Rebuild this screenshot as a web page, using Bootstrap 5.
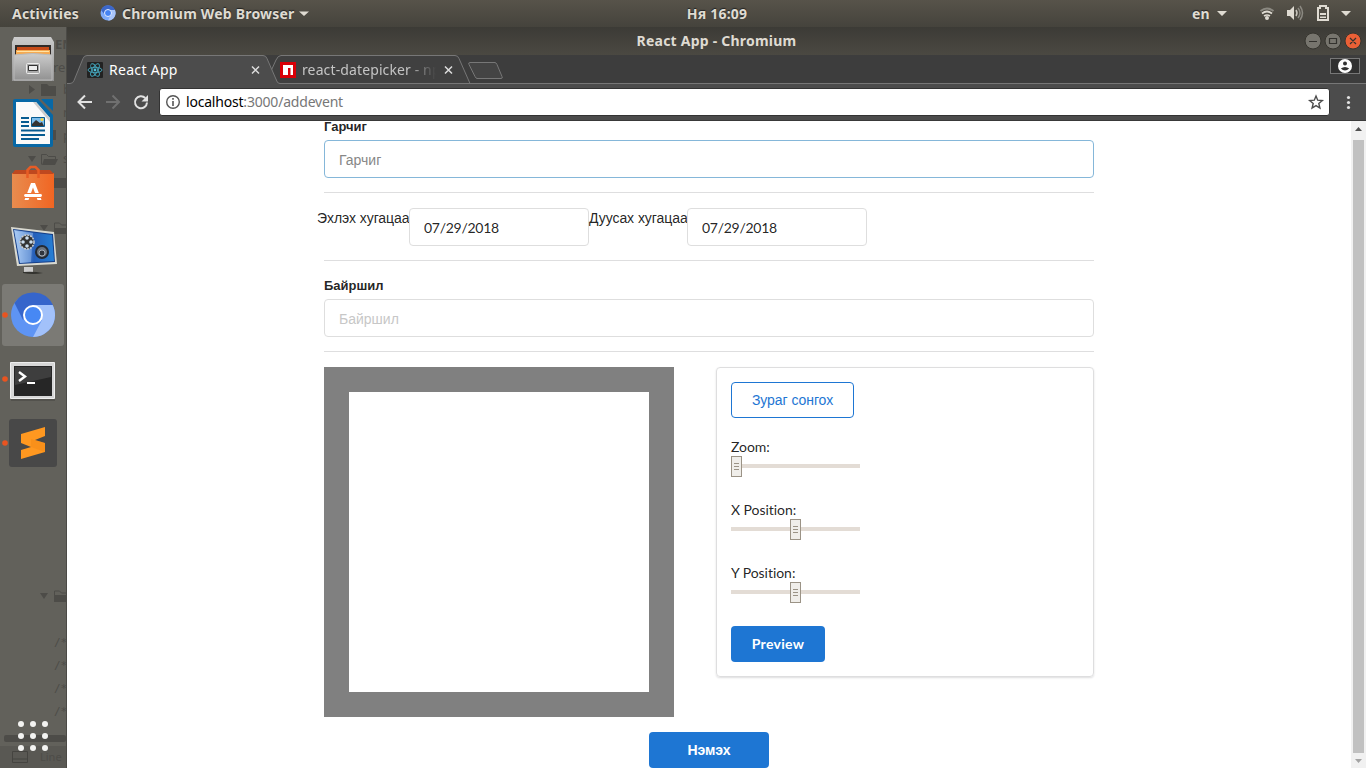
<!DOCTYPE html>
<html lang="mn">
<head>
<meta charset="utf-8">
<meta name="viewport" content="width=device-width, initial-scale=1">
<title>React App</title>
<link href="https://cdn.jsdelivr.net/npm/bootstrap@5.3.0/dist/css/bootstrap.min.css" rel="stylesheet">
<style>
  html, body { height: 100%; overflow: hidden; }
  body { font-family: "Noto Sans", sans-serif; background: #fff; }
  svg { display: block; flex: none; }
  .topbar { height: 27px; flex: none; background: linear-gradient(#57534a, #45433c); color: #dfdbd2; font: bold 14px/27px "Noto Sans", sans-serif; letter-spacing: .2px; text-shadow: 0 -1px 1px #222; }
  .dock { width: 67px; flex: none; background: #62615b; border-right: 1px solid #4b4a46; position: relative; }
  .dock > svg { position: relative; }
  .ghost { position: absolute !important; left: 0; top: 0; font-family: "Noto Sans", sans-serif; font-size: 13px; }
  .titlebar { height: 28px; flex: none; background: linear-gradient(#3c3b36, #4b4942); color: #dfdbd2; font: bold 14px/28px "Noto Sans", sans-serif; letter-spacing: .22px; }
  .tabstrip { height: 29px; flex: none; background: #3d3d3d; position: relative; }
  .tabshapes { position: absolute; left: 0; top: 0; }
  .tabrow { position: relative; height: 29px; color: #fff; font: 14px/29px "Noto Sans", sans-serif; white-space: nowrap; }
  .tabtitle { overflow: hidden; margin-left: 6px; letter-spacing: .3px; }
  .fade-out { color: #c4c4c4; letter-spacing: .12px; -webkit-mask-image: linear-gradient(90deg, #000 106px, transparent 134px); }
  .toolbar { height: 37px; flex: none; background: #4c4c4c; border-bottom: 1px solid #393939; }
  .omnibox { height: 28px; background: #fff; border: 1px solid #333; border-radius: 3px; font: 14px/26px "Noto Sans", sans-serif; letter-spacing: -.2px; color: #777; }
  .viewport-area { min-height: 0; background: #fff; font-family: Lato, "Liberation Sans", sans-serif; font-size: 14px; color: rgba(0,0,0,.87); overflow: hidden; font-variant-ligatures: none; }
  .event-form { width: 770px; margin-left: 257px; }
  .cyr { font-family: "Liberation Sans", sans-serif; }
  .event-form label { display: block; font-size: 13px; font-weight: 700; line-height: 13px; }
  .event-form .form-control { height: 38px; font-size: 14px; line-height: 17px; padding: 9px 14px; border: 1px solid #dedede; border-radius: 4px; color: rgba(0,0,0,.87); }
  .event-form .form-control.cyr { padding: 11px 14px 9px; }
  .event-form .form-control::placeholder { color: #c7c7c7; opacity: 1; }
  .event-form .form-control.active { border-color: #85b7d9; }
  .event-form .form-control.active::placeholder { color: #878787; }
  .event-form hr { margin: 14px 0 15px; border-color: #d4d4d5; opacity: 1; border-top: 1px solid #dededf; }
  .event-form .datefield { width: 180px; letter-spacing: -.28px; }
  .dates { margin-left: -7px; line-height: 20px; }
  .dates .cyr { letter-spacing: -.06px; }
  .cropbox { width: 350px; height: 350px; border: 25px solid #808080; }
  .panel { width: 378px; height: 310px; border: 1px solid #dededf; border-radius: 4px; box-shadow: 0 1px 2px rgba(34,36,38,.15); padding: 14px; }
  .event-form .btn { height: 36px; border-radius: 4px; font-size: 14px; line-height: 14px; padding: 0 20px; }
  .event-form .pick { color: #1e76d3; border-color: #1e76d3; width: 123px; padding: 0; letter-spacing: -.06px; }
  .solid { background: #1e76d3; color: #fff; font-weight: 700; border: 0; }
  .preview { width: 94px; letter-spacing: .3px; }
  .slider-group { height: 63px; line-height: 20px; letter-spacing: -.04px; }
  .track { width: 129px; height: 4px; background: #e3dcd5; margin-top: 7px; position: relative; }
  .thumb { position: absolute; top: -8px; }
  .scroller { width: 15px; background: #f1f1f1; flex: none; }
  .scroll-thumb { width: 11px; background: #c1c1c1; height: 613px; }
</style>
</head>
<body class="d-flex flex-column">
<header class="topbar d-flex position-relative">
  <span style="margin-left:12px;width:68px">Activities</span>
  <svg width="16" height="27" style="margin-left:20px" viewBox="0 0 16 27"><circle cx="8" cy="13" r="7.500" fill="#7daafa"/><path d="M1 10A7.500 7.500 0 0 1 15 10H8L5 15Z" fill="#3c67c9"/><path d="M8 10h7A7.500 7.500 0 0 1 8 20.500L11 14Z" fill="#a9c5fa"/><circle cx="8" cy="13" r="3.500" fill="#4583f3" stroke="#e4edff"/></svg>
  <span class="text-nowrap" style="margin-left:6px;width:173px">Chromium Web Browser</span>
  <svg width="10" height="27" style="margin-left:4px"><path d="M0 11.500h10L5 16Z" fill="#dfdbd2"/></svg>
  <span class="position-absolute start-50 translate-middle-x" style="padding-left:68px">Ня 16:09</span>
  <span class="ms-auto" style="width:20px">en</span>
  <svg width="154" height="27" viewBox="1212 0 154 27" fill="#dfdbd2"><path d="M1217 11h10l-5 5ZM1341 11h10l-5 5Z"/><circle cx="1267" cy="18" r="2"/><path d="M1260.500 11q6.500-5 13 0" fill="none" stroke="#8b8981" stroke-width="2"/><path d="M1262 13.500q5-4 10 0M1264 16q3-2 6 0" fill="none" stroke="#dfdbd2" stroke-width="1.700"/><path d="M1287 10h3l4-4v14l-4-4h-3Z"/><path d="M1296 10q2 3 0 6" stroke="#c9c6be" fill="none" stroke-width="1.500"/><path d="M1298 8q4 5 0 10M1300 6q5 7 0 14" stroke="#8b8981" fill="none" stroke-width="1.500"/><path d="M1318 8h2V6h6v2h2v12h-10Z" fill="none" stroke="#dfdbd2" stroke-width="2"/><path d="M1320 13h6v2h-6ZM1320 16.500h6v1.500h-6Z"/></svg>
</header>

<div class="d-flex flex-grow-1" style="min-height:0">
  <aside class="dock d-flex flex-column">
    <svg class="ghost" width="66" height="741" viewBox="0 27 66 741" fill="#4d4c48">
      <text x="55" y="49" font-weight="bold">EN</text><text x="53" y="72">rec</text>
      <path d="M29 85l6 4.500-6 4.500ZM41 84h6l2 2h7v10H41ZM41 130h15v10H41ZM28 156h8l-4 6ZM54 178h12v10H54ZM40 225h8l-4 6ZM40 593h8l-4 6Z"/><path d="M41.500 164.500v-10h5l2 2h7v3M54.500 233v-10h5l2 2h5M54.500 602v-11h5l2 2h5" fill="none" stroke="#4d4c48"/><path d="M44 159h14l-3 6H42ZM54 228h12v6H54ZM54 595h12v7H54Z"/>
      <text x="63" y="94">b</text><text x="63" y="117">n</text><text x="63" y="140">p</text><text x="63" y="163">s</text>
      <g font-family="DejaVu Sans Mono" font-size="11"><text x="54" y="646">/*</text><text x="54" y="669">/*</text><text x="54" y="692">/*</text><text x="54" y="715">/*</text></g>
      <rect x="4" y="735" width="62" height="7" rx="2"/><path d="M0 746h66v22H0Z" fill="#595853"/><path d="M12.500 751.500h15v11h-15ZM13 759h15" fill="none" stroke="#454440"/><text x="40" y="761" font-size="11">Line</text>
    </svg>
    <svg width="66" height="64" viewBox="0 27 66 64"><defs><linearGradient id="metal" x2="0" y2="1"><stop stop-color="#ccc"/><stop offset="1" stop-color="#929292"/></linearGradient></defs><path d="M14 37h37l3 5v39H12V42Z" fill="url(#metal)"/><path d="M15 45h36v11H15Z" fill="#312b28"/><path d="M17 47h32v8H17Z" fill="#c64b18"/><path d="M16 50h34v6H16Z" fill="#f5aa52"/><path d="M17 51h32v1H17Z" fill="#ffe3a5"/><path d="M14 55q19-3 38 0v25H14Z" fill="url(#metal)" stroke="#b9b9b9"/><rect x="26.500" y="63.500" width="13" height="10" rx="1" fill="#aaa" stroke="#ededed"/><path d="M28.500 65.500h9v5h-9Z" fill="#eee" stroke="#333"/></svg>
    <svg width="66" height="64" viewBox="0 91 66 64"><path d="M15 99h23l15 16v30q0 2-2 2H15q-2 0-2-2v-44q0-2 2-2ZM41 99h12v12Z" fill="#0768a6"/><path d="M16 102h20l14 16v26H16Z" fill="#fafafa"/><path d="M36 102l14 16v4L33 102Z" fill="#ccc"/><path d="M21 118h8M21 122h8M21 126h8M21 130.500h24M21 135h24M21 139h18" stroke="#085c91" stroke-width="2"/><path d="M31.500 117.500h13v9h-13Z" fill="#7ebeec" stroke="#085c91"/><path d="M32 126v-2l4-4 4 3 2-1 2 4Z" fill="#333"/><circle cx="42" cy="119.500" r="1.500" fill="#f6d545"/></svg>
    <svg width="66" height="64" viewBox="0 155 66 64"><defs><linearGradient id="bag" x2="1"><stop stop-color="#e88c4f"/><stop offset="1" stop-color="#f16522"/></linearGradient></defs><path d="M12 173h42v35H12Z" fill="url(#bag)"/><path d="M12 174l3-4h35l4 4Z" fill="#bf481f"/><path d="M27.500 178v-8l3-3h5l3 3v8" fill="none" stroke="#e75c25" stroke-width="2.500"/><path d="M31 183h4l6.500 17h-4L33 187.500 28.500 200h-4Z" fill="#fff"/><path d="M24 193h18v5H24Z" fill="#f07434"/><path d="M25.500 195.500h15" fill="none" stroke="#fff" stroke-width="2.800" stroke-linecap="round"/></svg>
    <svg width="66" height="64" viewBox="0 219 66 64"><defs><linearGradient id="mon" x2="1"><stop stop-color="#a7caf5"/><stop offset=".5" stop-color="#265fb9"/><stop offset="1" stop-color="#2680d5"/></linearGradient></defs><path d="M11 227l43 5 3 32-40 2Z" fill="#d9d9d0"/><path d="M13 229l40 5 2 28-36 2Z" fill="#173f88"/><path d="M14 230l38 5 2 26-34 2Z" fill="url(#mon)"/><path d="M33 233l-2 29-11 1-5-32Z" fill="#b4d1f8" opacity=".4"/><circle cx="27" cy="242" r="7" fill="#333" stroke="#ccc" stroke-width="1.500" stroke-dasharray="2 1"/><g fill="#cde"><circle cx="27" cy="238" r="1.800"/><circle cx="27" cy="246" r="1.800"/><circle cx="23" cy="242" r="1.800"/><circle cx="31" cy="242" r="1.800"/></g><circle cx="42" cy="252" r="6" fill="#6b737d" stroke="#242a33" stroke-width="2"/><circle cx="42" cy="253" r="3" fill="#30353d" stroke="#a4adb8"/><path d="M24 267h9v5h-9Z" fill="#ccc"/><path d="M23 272q10-1 20 1-10 2-20 0Z" fill="#33332f"/></svg>
    <svg width="66" height="64" viewBox="0 283 66 64"><rect x="2" y="284" width="62" height="62" rx="3" fill="#7b7a75"/><circle cx="5" cy="315" r="2.800" fill="#e95420"/><circle cx="33" cy="315" r="22" fill="#5e94f4"/><path d="M14.500 303A22 22 0 0 1 53 305H33L23 320Z" fill="#3665cb"/><path d="M33 305h19.600A22 22 0 0 1 33 337L42 320Z" fill="#a2c1fa"/><circle cx="33" cy="315" r="9" fill="#4788f4" stroke="#fff" stroke-width="2"/></svg>
    <svg width="66" height="64" viewBox="0 347 66 64"><circle cx="5" cy="379" r="2.800" fill="#e95420"/><path d="M10.500 362.500h44v36h-44Z" fill="#d7d7d7" stroke="#eee"/><path d="M11 400h44" stroke="#454440"/><path d="M14 366h38v30H14Z" fill="#262626"/><path d="M15 367h36v10L15 385Z" fill="#3e3e3e"/><path d="M19 372l6 4.500-6 4.500" fill="none" stroke="#fff" stroke-width="2.400"/><path d="M27 383h8" stroke="#fff" stroke-width="2"/></svg>
    <svg width="66" height="64" viewBox="0 411 66 64"><circle cx="5" cy="443" r="2.800" fill="#e95420"/><rect x="9" y="419" width="48" height="48" rx="3" fill="#484848"/><path d="M21 434l24-7v9l-10 4 10 3v9l-24 7v-9l10-3-10-4Z" fill="#ff9820"/><path d="M31 439l14 4v9l-14-5Z" fill="#ed8012" opacity=".35"/></svg>
    <svg class="mt-auto" width="66" height="64" viewBox="0 704 66 64" fill="#f3f3f1"><g id="dots"><circle cx="21" cy="724" r="3"/><circle cx="33" cy="724" r="3"/><circle cx="45" cy="724" r="3"/></g><use href="#dots" y="12"/><use href="#dots" y="24"/></svg>
  </aside>

  <section class="d-flex flex-column flex-grow-1" style="min-width:0">
    <div class="titlebar d-flex position-relative">
      <span class="position-absolute start-50 translate-middle-x text-nowrap">React App - Chromium</span>
      <svg class="ms-auto" width="66" height="28" viewBox="1300 27 66 28"><g fill="#77756e" stroke="#36352f"><circle cx="1313" cy="41" r="8"/><circle cx="1333" cy="41" r="8"/><circle cx="1353" cy="41" r="8" fill="#eb6036"/></g><path d="M1309 41.500h8M1329.500 38.500h7v5h-7ZM1350 38l6 6M1356 38l-6 6" fill="none" stroke="#33322e" stroke-width="1.200"/></svg>
    </div>
    <div class="tabstrip">
      <svg class="tabshapes" width="1299" height="29" viewBox="67 55 1299 29"><path d="M271 71l5-11q2-4.500 5-4.500h174q3 0 4 3l11 25H278Z" fill="#404040" stroke="#777"/><path d="M67 83.500h3q3 0 4-3l9-22q1-3 4-3h176q3 0 4 3l10 23q1 2 3 2H1366V84H67Z" fill="#4c4c4c"/><path d="M67 83.500h3q3 0 4-3l9-22q1-3 4-3h176q3 0 4 3l10 23q1 2 3 2H1366" fill="none" stroke="#777"/><path d="M470 62.500h25q1 0 2 2l5 12q1 2-1 2h-24q-1 0-2-2l-6-12q-1-2 1-2Z" fill="#444" stroke="#777"/><rect x="1330.500" y="58.500" width="29" height="15" fill="#303030" stroke="#777"/><circle cx="1345" cy="66" r="7" fill="#fff"/><circle cx="1345" cy="63.500" r="2" fill="#333"/><path d="M1340.800 68.500q4.200-3 8.400 0-4.200 4-8.400 0Z" fill="#333"/></svg>
      <div class="tabrow d-flex">
        <svg width="16" height="29" viewBox="0 0 16 29" style="margin-left:20px"><rect y="7" width="16" height="16" rx="1" fill="#222"/><g fill="none" stroke="#45a9c0" stroke-width=".9"><ellipse cx="8" cy="15" rx="7" ry="2.700"/><ellipse cx="8" cy="15" rx="7" ry="2.700" transform="rotate(60 8 15)"/><ellipse cx="8" cy="15" rx="7" ry="2.700" transform="rotate(120 8 15)"/></g><circle cx="8" cy="15" r="1.400" fill="#53c1dc"/></svg>
        <span class="tabtitle" style="width:142px">React App</span>
        <svg width="9" height="29"><path d="M1 11.500l7 7M8 11.500l-7 7" stroke="#ddd" stroke-width="1.500"/></svg>
        <svg width="16" height="29" style="margin-left:20px"><path d="M0 7h16v16H0Z" fill="#d90007"/><path d="M3 10h10v10h-2.500v-7H8v7H3Z" fill="#fff"/></svg>
        <span class="tabtitle fade-out" style="width:134px">react-datepicker - npm</span>
        <svg width="9" height="29" style="margin-left:8px"><path d="M1 11.500l7 7M8 11.500l-7 7" stroke="#ddd" stroke-width="1.500"/></svg>
      </div>
    </div>
    <div class="toolbar d-flex align-items-center">
      <svg width="92" height="36" viewBox="67 84 92 36" fill="none" stroke-width="2"><path d="M92 102H79M85 95.500L78.500 102l6.500 6.500" stroke="#e2e2e2"/><path d="M106 102h13M112.500 95.500L119 102l-6.500 6.500" stroke="#707070"/><path d="M145.300 98A6 6 0 1 0 147 102.500" stroke="#e2e2e2"/><path d="M148 95v6.500h-6.500Z" fill="#e2e2e2"/></svg>
      <div class="omnibox d-flex flex-grow-1">
        <svg width="26" height="26" viewBox="160 89 26 26"><circle cx="173" cy="102" r="6.300" fill="none" stroke="#555" stroke-width="1.400"/><path d="M172.200 101h1.600v5h-1.600ZM172.200 98h1.600v1.700h-1.600Z" fill="#555"/></svg>
        <span><span class="text-black">localhost</span>:3000/addevent</span>
        <svg class="ms-auto" width="26" height="26" viewBox="1303 89 26 26"><path d="M1316 96l1.700 4.200 4.600.3-3.500 3 1.100 4.500-3.900-2.400-3.900 2.400 1.100-4.500-3.500-3 4.600-.3Z" fill="none" stroke="#4c4c4c" stroke-width="1.400"/></svg>
      </div>
      <svg width="36" height="36" fill="#e2e2e2"><circle cx="18.500" cy="13.500" r="1.600"/><circle cx="18.500" cy="18.500" r="1.600"/><circle cx="18.500" cy="23.500" r="1.600"/></svg>
    </div>

    <main class="viewport-area d-flex flex-grow-1">
      <div class="flex-grow-1">
        <form class="event-form">
          <label class="cyr" for="title" style="line-height:11px;padding-bottom:8px">Гарчиг</label>
          <input class="form-control cyr active shadow-none" id="title" placeholder="Гарчиг">
          <hr>
          <div class="dates d-flex">
            <span class="cyr text-nowrap" style="width:92px">Эхлэх хугацаа</span>
            <input class="form-control datefield" value="07/29/2018">
            <span class="cyr text-nowrap" style="width:98px">Дуусах хугацаа</span>
            <input class="form-control datefield" value="07/29/2018">
          </div>
          <hr>
          <label class="cyr" for="place" style="padding:3px 0 7px">Байршил</label>
          <input class="form-control cyr" id="place" placeholder="Байршил">
          <hr>
          <div class="d-flex justify-content-between">
            <div class="cropbox"></div>
            <div class="panel">
              <button type="button" class="btn pick cyr">Зураг сонгох</button>
              <div class="slider-group" style="margin-top:19px">Zoom:
                <div class="track"><svg class="thumb" width="11" height="21"><rect x=".5" y=".5" width="10" height="20" fill="#f0eeea" stroke="#9b9386"/><path d="M3 7.500h5M3 10.500h5M3 13.500h5" stroke="#9b9386"/></svg></div></div>
              <div class="slider-group">X Position:
                <div class="track"><svg class="thumb" style="left:59px" width="11" height="21"><rect x=".5" y=".5" width="10" height="20" fill="#f0eeea" stroke="#9b9386"/><path d="M3 7.500h5M3 10.500h5M3 13.500h5" stroke="#9b9386"/></svg></div></div>
              <div class="slider-group">Y Position:
                <div class="track"><svg class="thumb" style="left:59px" width="11" height="21"><rect x=".5" y=".5" width="10" height="20" fill="#f0eeea" stroke="#9b9386"/><path d="M3 7.500h5M3 10.500h5M3 13.500h5" stroke="#9b9386"/></svg></div></div>
              <button type="button" class="btn solid preview">Preview</button>
            </div>
          </div>
          <button type="button" class="btn solid cyr d-block" style="width:120px;margin:15px 0 0 325px">Нэмэх</button>
        </form>
      </div>
      <div class="scroller d-flex flex-column align-items-center justify-content-between">
        <svg width="15" height="19"><path d="M4 10h7L7.500 6Z" fill="#505050"/></svg>
        <div class="scroll-thumb"></div>
        <svg width="15" height="15"><path d="M4 6h7l-3.500 4Z" fill="#a3a3a3"/></svg>
      </div>
    </main>
  </section>
</div>
<script src="https://cdn.jsdelivr.net/npm/bootstrap@5.3.0/dist/js/bootstrap.bundle.min.js"></script>
</body>
</html>
